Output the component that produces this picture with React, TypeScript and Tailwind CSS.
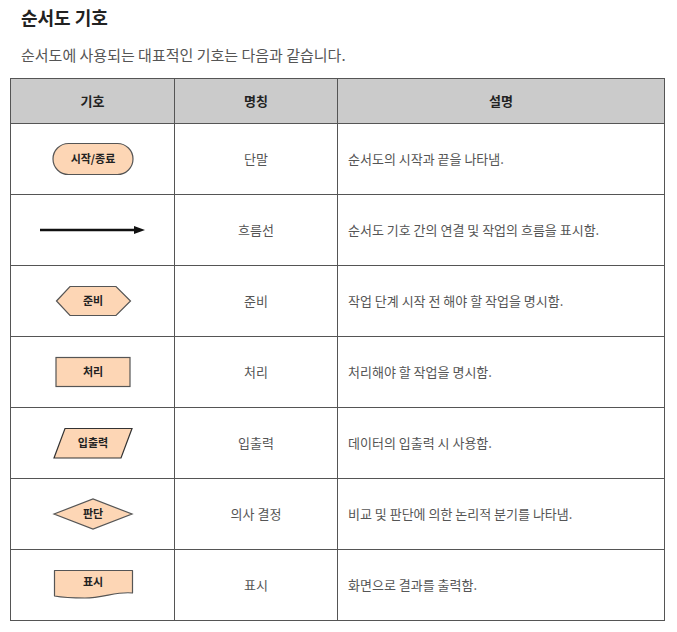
import React from 'react';

const FILL = '#fdd6b5';
const STROKE = '#555555';

// Flowchart symbols drawn in a fixed 90x36 box
const Terminal = () => (
    <svg width="90" height="36" viewBox="0 0 90 36">
        <rect x="5" y="2.5" width="80" height="31" rx="15.5" fill={FILL} stroke={STROKE} strokeWidth="1.2" />
        <text x="45" y="22" textAnchor="middle" fontSize="11" fontWeight="600" fill="#222">시작/종료</text>
    </svg>
);

const Arrow = () => (
    <svg width="110" height="12" viewBox="0 0 110 12">
        <line x1="2" y1="6" x2="98" y2="6" stroke="#111" strokeWidth="2.4" />
        <polygon points="96,2 107,6 96,10" fill="#111" />
    </svg>
);

const Preparation = () => (
    <svg width="90" height="36" viewBox="0 0 90 36">
        <polygon points="8.5,18 22,3.5 68,3.5 82.5,18 68,32.5 22,32.5" fill={FILL} stroke={STROKE} strokeWidth="1.2" />
        <text x="45" y="22" textAnchor="middle" fontSize="11" fontWeight="600" fill="#222">준비</text>
    </svg>
);

const Process = () => (
    <svg width="90" height="36" viewBox="0 0 90 36">
        <rect x="8" y="3.5" width="74" height="29" fill={FILL} stroke={STROKE} strokeWidth="1.2" />
        <text x="45" y="22" textAnchor="middle" fontSize="11" fontWeight="600" fill="#222">처리</text>
    </svg>
);

const InputOutput = () => (
    <svg width="90" height="36" viewBox="0 0 90 36">
        <polygon points="17,3.5 84,3.5 73,33 6,33" fill={FILL} stroke="#333" strokeWidth="1.2" />
        <text x="45" y="22" textAnchor="middle" fontSize="11" fontWeight="600" fill="#222">입출력</text>
    </svg>
);

const Decision = () => (
    <svg width="90" height="36" viewBox="0 0 90 36">
        <polygon points="6,18 45,3 84,18 45,33" fill={FILL} stroke={STROKE} strokeWidth="1.2" />
        <text x="45" y="22" textAnchor="middle" fontSize="11" fontWeight="600" fill="#222">판단</text>
    </svg>
);

const Display = () => (
    <svg width="90" height="36" viewBox="0 0 90 36">
        <path d="M6.5,3.5 H84.5 V26 C70,24 55,31 37,31 C22,31 12,30 6.5,29 Z" fill={FILL} stroke={STROKE} strokeWidth="1.2" strokeLinejoin="round" />
        <text x="45" y="19" textAnchor="middle" fontSize="11" fontWeight="600" fill="#222">표시</text>
    </svg>
);

const rows = [
    { icon: <Terminal />, name: '단말', desc: '순서도의 시작과 끝을 나타냄.' },
    { icon: <Arrow />, name: '흐름선', desc: '순서도 기호 간의 연결 및 작업의 흐름을 표시함.' },
    { icon: <Preparation />, name: '준비', desc: '작업 단계 시작 전 해야 할 작업을 명시함.' },
    { icon: <Process />, name: '처리', desc: '처리해야 할 작업을 명시함.' },
    { icon: <InputOutput />, name: '입출력', desc: '데이터의 입출력 시 사용함.' },
    { icon: <Decision />, name: '의사 결정', desc: '비교 및 판단에 의한 논리적 분기를 나타냄.' },
    { icon: <Display />, name: '표시', desc: '화면으로 결과를 출력함.' },
];

export default function App() {
    return (
        <div className="bg-white w-[677px] h-[632px] pl-[10px] pt-[5px]" style={{ fontFamily: '"Noto Sans CJK KR", "Noto Sans", sans-serif' }}>
            <h2 className="pl-[11px] text-[18px] font-bold leading-[24px] text-[#222]">순서도 기호</h2>
            <p className="pl-[11px] mt-[15px] text-[15px] leading-[22px] text-[#555]">순서도에 사용되는 대표적인 기호는 다음과 같습니다.</p>

            <table className="mt-[12px] border-collapse table-fixed w-[655px] text-[13px]">
                <colgroup>
                    <col className="w-[164px]" />
                    <col className="w-[163px]" />
                    <col />
                </colgroup>
                <thead>
                    <tr className="h-[45px] bg-[#cbcbcb]">
                        <th className="border border-[#555] font-bold text-[#222]">기호</th>
                        <th className="border border-[#555] font-bold text-[#222]">명칭</th>
                        <th className="border border-[#555] font-bold text-[#222]">설명</th>
                    </tr>
                </thead>
                <tbody>
                    {rows.map(row => (
                        <tr key={row.name} className="h-[71px]">
                            <td className="border border-[#555] align-middle">
                                <div className="flex justify-center items-center">{row.icon}</div>
                            </td>
                            <td className="border border-[#555] text-center text-[#555]">{row.name}</td>
                            <td className="border border-[#555] pl-[10px] text-[#555]">{row.desc}</td>
                        </tr>
                    ))}
                </tbody>
            </table>
        </div>
    );
}
